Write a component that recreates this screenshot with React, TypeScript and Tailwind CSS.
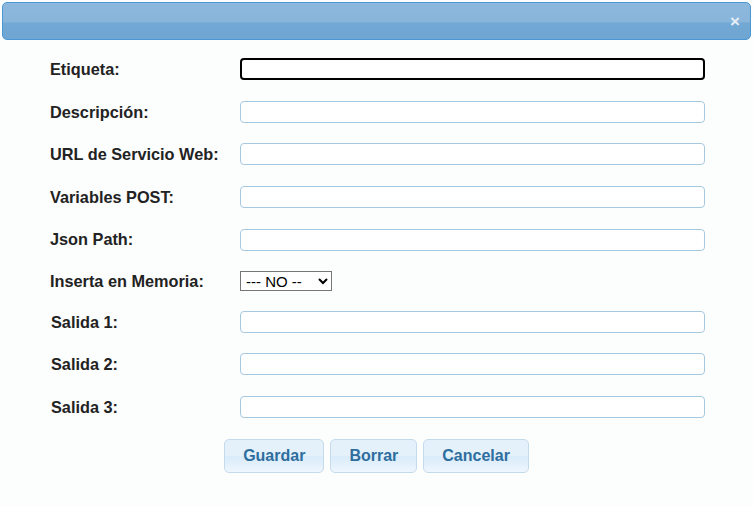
import React from "react";

const fields = [
  { label: "Etiqueta:", focused: true },
  { label: "Descripción:" },
  { label: "URL de Servicio Web:" },
  { label: "Variables POST:" },
  { label: "Json Path:" },
];

const salidas = ["Salida 1:", "Salida 2:", "Salida 3:"];

function Row({
  label,
  children,
  indent,
  short,
}: {
  label: string;
  children: React.ReactNode;
  indent?: boolean;
  short?: boolean;
}) {
  return (
    <div className={`flex items-center ${short ? "h-[39.6px]" : "h-[42.6px]"}`}>
      <label className={`w-[190px] shrink-0 text-[16.3px] font-bold text-[#222222] ${indent ? "pl-px" : ""}`}>
        {label}
      </label>
      {children}
    </div>
  );
}

function TextInput({ focused }: { focused?: boolean }) {
  return (
    <input
      type="text"
      className={
        focused
          ? "h-[22px] w-[465px] rounded-[4px] border-2 border-black bg-white outline-none"
          : "h-[22px] w-[465px] rounded-[4px] border border-[#a6c9e2] bg-white outline-none"
      }
    />
  );
}

export default function App() {
  return (
    <div className="h-[506px] w-[753px] bg-[#fcfdfd] font-['Liberation_Sans',Arial,sans-serif]">
      {/* Title bar */}
      <div className="px-[2px] pt-[2px]">
        <div className="relative flex h-[38px] items-center justify-end rounded-[5px] border border-[#4b97d4] bg-[linear-gradient(to_bottom,#8cb8dd_0%,#89b5db_52%,#72a8d4_56%,#6fa5d2_100%)] pr-[10px]">
          <span className="text-[17px] font-bold leading-none text-[#e6eef6]">×</span>
        </div>
      </div>

      {/* Form */}
      <div className="pl-[50px] pt-[8px]">
        {fields.map((f) => (
          <Row key={f.label} label={f.label}>
            <TextInput focused={f.focused} />
          </Row>
        ))}
        <Row label="Inserta en Memoria:" short>
          <select className="h-[20px] w-[92px] border border-[#767676] bg-white pl-[1px] text-[15px] text-black">
            <option>--- NO --</option>
          </select>
        </Row>
        {salidas.map((s) => (
          <Row key={s} label={s} indent>
            <TextInput />
          </Row>
        ))}
      </div>

      {/* Buttons */}
      <div className="mt-[11px] flex justify-center gap-[6px]">
        {["Guardar", "Borrar", "Cancelar"].map((b) => (
          <button
            key={b}
            className="h-[34px] rounded-[5px] border border-[#c5dbec] bg-[linear-gradient(to_bottom,#e4f1fb_0%,#e4f1fb_50%,#d9ebfa_52%,#eef6fd_100%)] px-[18px] text-[16px] font-bold text-[#2e6e9e]"
          >
            {b}
          </button>
        ))}
      </div>
    </div>
  );
}
